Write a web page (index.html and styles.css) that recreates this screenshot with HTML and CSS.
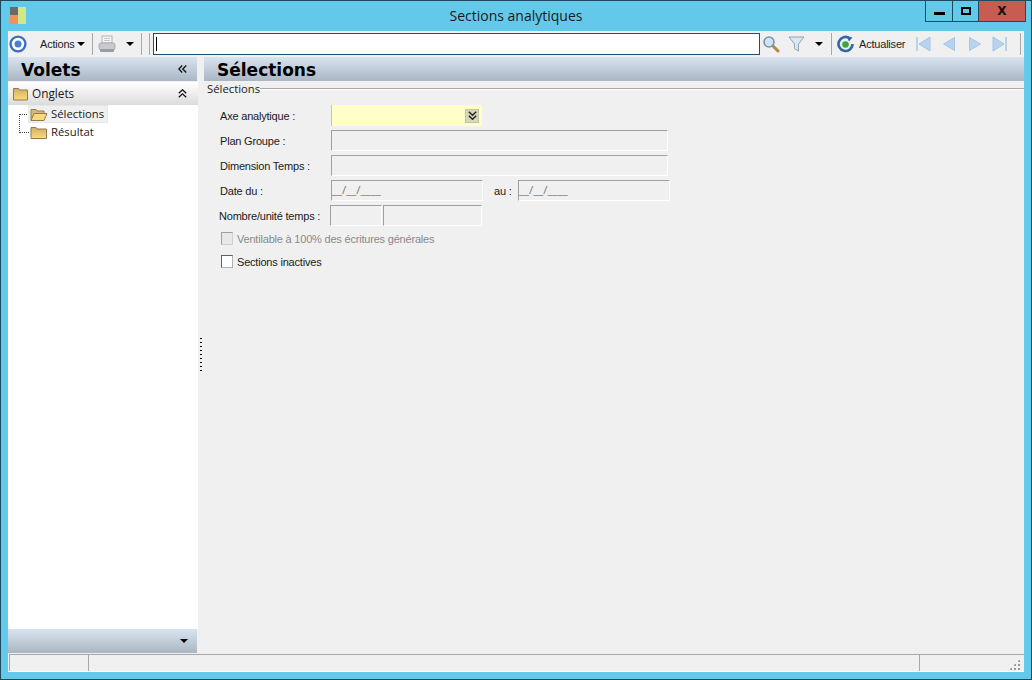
FILE: index.html
```html
<!DOCTYPE html>
<html lang="fr">
<head>
<meta charset="utf-8">
<title>Sections analytiques</title>
<link rel="stylesheet" href="styles.css">
</head>
<body>
<svg class="defs" width="0" height="0"><defs><linearGradient id="fold" x1="0" y1="0" x2="0" y2="1"><stop offset="0" stop-color="#cfae6c"/><stop offset="1" stop-color="#ffdc70"/></linearGradient></defs></svg>
<div class="window">
  <header class="titlebar">
    <div class="logo"><svg width="17" height="17" viewBox="0 0 17 17"><rect x="0" y="0" width="8" height="8" fill="#6a6a6a"/><rect x="0" y="8" width="8" height="9" fill="#f0915a"/><rect x="8" y="0" width="8" height="17" fill="#cfe88a"/></svg></div>
    <div class="title">Sections analytiques</div>
    <div class="caption">
      <div class="cap cap-min"><span class="min-glyph"></span></div>
      <div class="cap cap-max"><span class="max-glyph"></span></div>
      <div class="cap cap-close">X</div>
    </div>
  </header>
  <div class="client">
    <div class="toolbar">
      <svg class="i-target" width="18" height="18" viewBox="0 0 18 18"><circle cx="9" cy="9" r="7.400" fill="#fff" stroke="#3a6fc0" stroke-width="2.400"/><circle cx="9" cy="9" r="3.500" fill="#4a80d0"/></svg>
      <span class="tb-text t-actions">Actions</span><span class="arrow a-actions"></span>
      <span class="sep s1"></span>
      <svg class="i-print" width="18" height="18" viewBox="0 0 18 18"><rect x="4" y="1" width="10" height="7" fill="#f4f4f4" stroke="#b0b4b8"/><rect x="1" y="8" width="16" height="7" rx="2" fill="#c8cbce" stroke="#a8acb0"/><rect x="2" y="14" width="14" height="3" rx="1" fill="#9a9ea2"/><path d="M6 3.500h6M6 5.500h6" stroke="#c4c8cc"/></svg>
      <span class="arrow a-print"></span>
      <span class="sep s2"></span><span class="sep s3"></span>
      <div class="search"><span class="caret"></span></div>
      <svg class="i-search" width="18" height="18" viewBox="0 0 18 18"><path d="M10 10l6 6" stroke="#b08a40" stroke-width="3" stroke-linecap="round"/><circle cx="7" cy="7" r="5" fill="#cfe4f6" stroke="#7a94ac" stroke-width="1.600"/></svg>
      <svg class="i-filter" width="17" height="18" viewBox="0 0 17 18"><path d="M1 2h15l-5.500 7v7l-4-2.500V9z" fill="#dbe6ee" stroke="#8fa6b6"/></svg>
      <span class="arrow a-filter"></span>
      <span class="sep s4"></span>
      <svg class="i-refresh" width="17" height="18" viewBox="0 0 17 18"><path d="M12.500 3.200A7 7 0 1 0 15.500 9" fill="none" stroke="#2f68a8" stroke-width="2.600"/><path d="M9.500 1l6 1.500-3.500 4z" fill="#2f68a8"/><circle cx="8.500" cy="9.500" r="3.300" fill="#3aa83c"/></svg>
      <span class="tb-text t-refresh">Actualiser</span>
      <svg class="i-first" width="16" height="16" viewBox="0 0 16 16"><path d="M1 1h2v14H1z" fill="#b7d3ee"/><path d="M15 1v14L4 8z" fill="#b7d3ee" stroke="#a6c6e4"/></svg>
      <svg class="i-prev" width="12" height="14" viewBox="0 0 12 14"><path d="M11.500 0.500v13L0.500 7z" fill="#b7d3ee" stroke="#a6c6e4"/></svg>
      <svg class="i-next" width="12" height="14" viewBox="0 0 12 14"><path d="M0.500 0.500v13L11.500 7z" fill="#b7d3ee" stroke="#a6c6e4"/></svg>
      <svg class="i-last" width="16" height="16" viewBox="0 0 16 16"><path d="M13 1h2v14h-2z" fill="#b7d3ee"/><path d="M1 1v14l11-7z" fill="#b7d3ee" stroke="#a6c6e4"/></svg>
      <span class="sep s5"></span>
    </div>
    <div class="main">
      <aside class="panel">
        <div class="band panel-head"><span class="band-title">Volets</span><svg class="head-chev" width="9" height="8" viewBox="0 0 9 8"><path d="M4.200 0.500L0.800 4l3.400 3.500M8.200 0.500L4.800 4l3.400 3.500" fill="none" stroke="#111" stroke-width="1.300"/></svg></div>
        <div class="group">
          <svg class="folder" width="15" height="14" viewBox="0 0 15 14"><path d="M0.500 13V1.500h5l1 1.500h8v10z" fill="url(#fold)" stroke="#8f7a52"/></svg>
          <span class="group-label">Onglets</span>
          <svg class="group-chev" width="9" height="9" viewBox="0 0 9 9"><path d="M0.800 4.200L4.500 0.800l3.700 3.400M0.800 8.200L4.500 4.800l3.700 3.400" fill="none" stroke="#111" stroke-width="1.300"/></svg>
        </div>
        <div class="tree">
          <div class="tree-lines"></div>
          <div class="node node-open">
            <svg width="18" height="13" viewBox="0 0 18 13"><path d="M1 12.500V1.500h5l1 1.500h7v2" fill="#d8b878" stroke="#8f7a52"/><path d="M1 12.500l3-7h13l-3 7z" fill="#fcd878" stroke="#8f7a52"/></svg>
            <span class="node-label">Sélections</span>
          </div>
          <div class="node">
            <svg width="18" height="13" viewBox="0 0 18 13"><path d="M1 12.500V1.500h5l1 1.500h9.500v9.500z" fill="url(#fold)" stroke="#8f7a52"/></svg>
            <span class="node-label">Résultat</span>
          </div>
        </div>
        <div class="band panel-foot"><span class="foot-arrow"></span></div>
      </aside>
      <div class="splitter"><span class="grip"></span></div>
      <section class="content">
        <div class="band content-head"><span class="band-title">Sélections</span></div>
        <div class="legend"><span class="legend-text">Sélections</span><span class="legend-line"></span></div>
        <form class="form">
          <div class="row"><label class="lbl">Axe analytique :</label>
            <div class="field combo"><span class="combo-btn"><svg width="9" height="9" viewBox="0 0 9 9"><path d="M0.800 0.800L4.500 4.200 8.200 0.800M0.800 4.800L4.500 8.200 8.200 4.800" fill="none" stroke="#222" stroke-width="1.500"/></svg></span></div>
          </div>
          <div class="row"><label class="lbl">Plan Groupe :</label><div class="field wide"></div></div>
          <div class="row"><label class="lbl">Dimension Temps :</label><div class="field wide"></div></div>
          <div class="row"><label class="lbl">Date du :</label><div class="field date">__/__/____</div><span class="lbl-au">au :</span><div class="field date2">__/__/____</div></div>
          <div class="row row-num"><label class="lbl lbl-num">Nombre/unité temps :</label><div class="field num"></div><div class="field unit"></div></div>
          <div class="check check-off"><span class="box box-off"></span><span>Ventilable à 100% des écritures générales</span></div>
          <div class="check"><span class="box"></span><span>Sections inactives</span></div>
        </form>
      </section>
    </div>
    <footer class="status">
      <div class="st st1"></div><div class="st st2"></div><div class="st st3"><span class="resize"></span></div>
    </footer>
  </div>
</div>
</body>
</html>
```
FILE: styles.css
```css
* { box-sizing: border-box; }
html, body { margin: 0; padding: 0; }
body { width: 1032px; height: 680px; overflow: hidden; font-family: "Open Sans", "Noto Sans", sans-serif; }
.defs { position: absolute; }
.window { width: 1032px; height: 680px; background: #63c9ea; border: 1px solid #1d4a5c; display: flex; flex-direction: column; }
.titlebar { height: 30px; display: grid; grid-template-columns: 1fr auto 1fr; align-items: start; flex: none; }
.logo { padding: 6px 0 0 9px; height: 30px; }
.logo svg { display: block; }
.title { font-size: 14px; line-height: 30px; color: #1a1a1a; }
.caption { justify-self: end; display: flex; height: 21px; margin-right: 5px; border: 1px solid #1d4a5c; border-top: 0; }
.cap { display: flex; align-items: center; justify-content: center; height: 20px; border-right: 1px solid #1d4a5c; }
.cap-min { width: 27px; }
.cap-max { width: 26px; }
.cap-close { width: 46px; background: #c75c50; border-right: 0; font: bold 12px "DejaVu Sans", sans-serif; color: #111; }
.min-glyph { width: 11px; height: 3px; background: #000; margin-top: 5px; }
.max-glyph { width: 10px; height: 8px; border: 2px solid #000; margin-left: 1px; }
.client { width: 1016px; height: 641px; margin-left: 7px; background: #f0f0f0; display: flex; flex-direction: column; }
.toolbar { height: 26px; flex: none; display: flex; align-items: center; font-family: "Liberation Sans", sans-serif; }
.toolbar svg { flex: none; display: block; }
.tb-text { font-size: 11px; color: #1c1c1c; letter-spacing: -0.200px; white-space: nowrap; }
.i-target { margin-left: 1px; }
.t-actions { margin-left: 13px; width: 37px; }
.arrow { width: 0; height: 0; border-style: solid; border-width: 4px 4px 0; border-color: #000 transparent transparent; flex: none; }
.a-actions { margin-left: 0; }
.sep { width: 1px; height: 22px; background: #a8a8a8; flex: none; }
.s1 { margin-left: 7px; }
.i-print { margin-left: 5px; }
.a-print { margin-left: 10px; }
.s2 { margin-left: 7px; }
.s3 { margin-left: 7px; }
.search { width: 607px; height: 22px; margin-left: 3px; background: #fff; border: 1px solid #1f4f70; padding: 3px 2px; flex: none; }
.caret { display: block; width: 1px; height: 14px; background: #000; }
.i-search { margin-left: 2px; }
.i-filter { margin-left: 8px; }
.a-filter { margin-left: 10px; }
.s4 { margin-left: 8px; }
.i-refresh { margin-left: 5px; }
.t-refresh { margin-left: 5px; width: 48px; }
.i-first { margin-left: 8px; }
.i-prev { margin-left: 12px; }
.i-next { margin-left: 14px; }
.i-last { margin-left: 11px; }
.s5 { margin-left: 12px; }
.main { flex: 1; display: flex; min-height: 0; }
.band { background: linear-gradient(#d9e4f0, #aab6c3); display: flex; align-items: center; flex: none; }
.band-title { font: bold 17px "DejaVu Sans", sans-serif; color: #000; padding-top: 2px; }
.panel { width: 190px; display: flex; flex-direction: column; flex: none; }
.panel-head { height: 24px; padding-left: 13px; justify-content: space-between; padding-right: 10px; width: 189px; }
.group { height: 23px; margin-top: 1px; background: linear-gradient(#fff, #dcdcdc); display: flex; align-items: center; padding-left: 5px; font-size: 11.800px; color: #1a1a1a; flex: none; }
.folder { flex: none; }
.group-label { margin-left: 4px; flex: 1; position: relative; top: -1px; }
.group-chev { margin-right: 11px; }
.tree { flex: 1; background: #fff; position: relative; padding: 0 0 0 20px; font-size: 11.300px; color: #1a1a1a; }
.tree-lines { position: absolute; left: 11px; top: 9px; width: 10px; height: 19px; border-left: 1px dotted #444; border-bottom: 1px dotted #444; border-top: 1px dotted #444; }
.node { height: 18px; display: flex; align-items: center; position: relative; gap: 3px; width: 80px; padding-left: 2px; }
.node svg { flex: none; }
.node-label { position: relative; top: -1px; }
.node-open { width: 80px; background: #f0f0f0; border: 1px solid #e6e6e6; padding-left: 1px; }
.panel-foot { height: 24px; width: 189px; justify-content: flex-end; padding-right: 9px; }
.foot-arrow { width: 0; height: 0; border-style: solid; border-width: 4px 4px 0; border-color: #000 transparent transparent; }
.splitter { width: 6px; display: flex; align-items: center; justify-content: center; flex: none; }
.grip { width: 2px; height: 36px; background: repeating-linear-gradient(#000 0 1.500px, transparent 1.500px 4px); margin-top: 2px; }
.content { flex: 1; display: flex; flex-direction: column; min-width: 0; }
.content-head { height: 24px; padding-left: 13px; }
.legend { display: flex; align-items: center; height: 15px; padding-left: 3px; font-size: 11.300px; color: #1a1a1a; }
.legend-line { flex: 1; height: 2px; border-top: 1px solid #a8a8a8; border-bottom: 1px solid #fff; }
.form { padding: 9px 0 0 15px; font: 11px "Liberation Sans", sans-serif; letter-spacing: -0.200px; color: #1a1a1a; display: flex; flex-direction: column; }
.row { height: 21px; margin-bottom: 4px; display: flex; align-items: center; }
.lbl { width: 112px; flex: none; padding-left: 1px; white-space: nowrap; }
.lbl-num { width: 111px; padding-left: 0; }
.field { height: 21px; border: 1px solid; border-color: #a0a0a0 #fff #fff #a0a0a0; flex: none; color: #777; font: 11.500px/18px "Open Sans", sans-serif; letter-spacing: 0; padding-left: 0; }
.combo { width: 151px; background: #ffffc8; border: 0; border-left: 1px solid #c8c8a0; display: flex; align-items: center; justify-content: flex-end; padding-right: 3px; }
.combo-btn { width: 14px; height: 14px; background: #d8d8b8; border: 1px solid #c4c4a4; display: flex; align-items: center; justify-content: center; }
.wide { width: 337px; }
.date { width: 152px; }
.lbl-au { width: 35px; padding-left: 11px; flex: none; white-space: nowrap; }
.date2 { width: 152px; }
.num { width: 52px; }
.unit { width: 99px; margin-left: 1px; }
.check { display: flex; align-items: center; height: 13px; gap: 4px; margin-bottom: 10px; padding-left: 2px; }
.check-off { margin-top: 2px; color: #8a8a8a; }
.box { width: 12px; height: 13px; background: #fff; border: 1px solid; border-color: #606060 #b0b0b0 #b0b0b0 #606060; flex: none; }
.box-off { background: #e8e8e8; border-color: #a0a0a0 #d0d0d0 #d0d0d0 #a0a0a0; }
.status { height: 18px; flex: none; margin-top: 1px; display: flex; border-bottom: 1px solid #fff; padding-left: 1px; }
.st { height: 17px; border-top: 1px solid #a8a8a8; border-left: 1px solid #a8a8a8; background: #f0f0f0; }
.st1 { width: 79px; }
.st2 { width: 831px; }
.st3 { flex: 1; position: relative; }
.resize { position: absolute; right: 4px; bottom: 1px; width: 11px; height: 11px; background:
  radial-gradient(circle, #9a9a9a 1px, transparent 1px) 0 0 / 4px 4px;
  clip-path: polygon(100% 0, 100% 100%, 0 100%); }
```
